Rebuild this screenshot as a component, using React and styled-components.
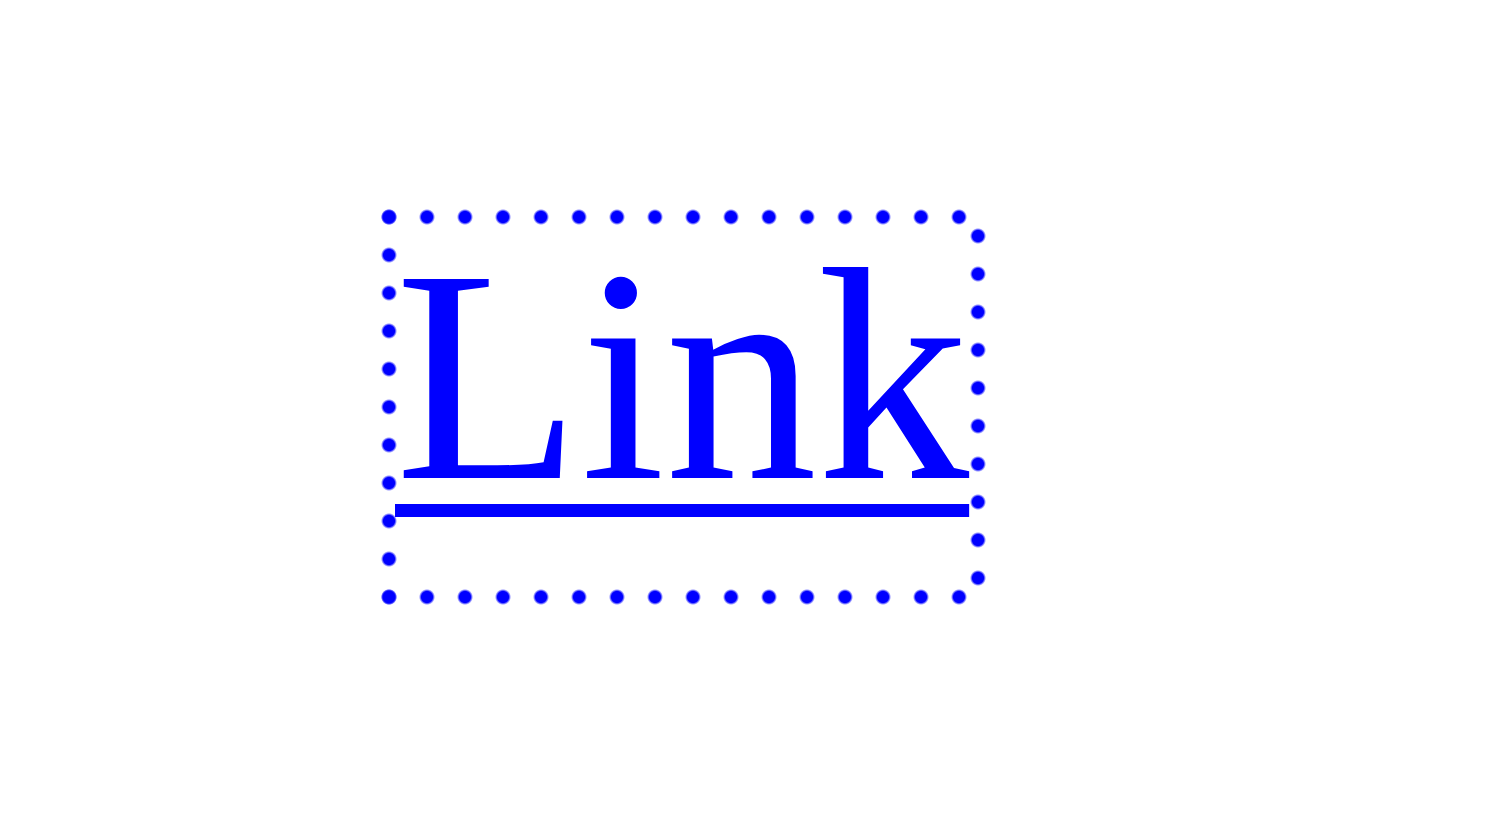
import React from 'react';
import styled, { createGlobalStyle } from 'styled-components';

const GlobalStyle = createGlobalStyle`
  html, body {
    margin: 0;
    background: #fff;
  }
`

const LINK_BLUE = '#0000ff'
const dot = `radial-gradient(circle 8px, ${LINK_BLUE} 70%, rgba(0,0,255,0) 100%)`

function App() {
  return (
    <>
      <GlobalStyle />
      <Page>
        <FocusRing>
          <TextLink href="#">Link</TextLink>
        </FocusRing>
      </Page>
    </>
  )
}

export default App

const Page = styled.main`
  width: 1500px;
  height: 835px;
  box-sizing: border-box;
  padding: 209px 0 0 381px;
  display: flex;
  align-items: flex-start;
`

// dotted focus outline, drawn as rows of round dots along each edge
const FocusRing = styled.div`
  width: 605px;
  height: 396px;
  box-sizing: border-box;
  padding-left: 14px;
  display: flex;
  align-items: flex-start;
  background-image: ${dot}, ${dot}, ${dot}, ${dot};
  background-size: 38px 16px, 38px 16px, 16px 38px, 16px 38px;
  background-repeat: repeat-x, repeat-x, repeat-y, repeat-y;
  background-position: -11px 0, -11px 100%, 0 -11px, 100% 8px;
`

const TextLink = styled.a`
  font-family: "Liberation Serif", "Times New Roman", serif;
  font-size: 304px;
  line-height: 334px;
  color: ${LINK_BLUE};
  text-decoration: underline;
  text-decoration-thickness: 13px;
  text-underline-offset: 26px;
  outline: none;
`
